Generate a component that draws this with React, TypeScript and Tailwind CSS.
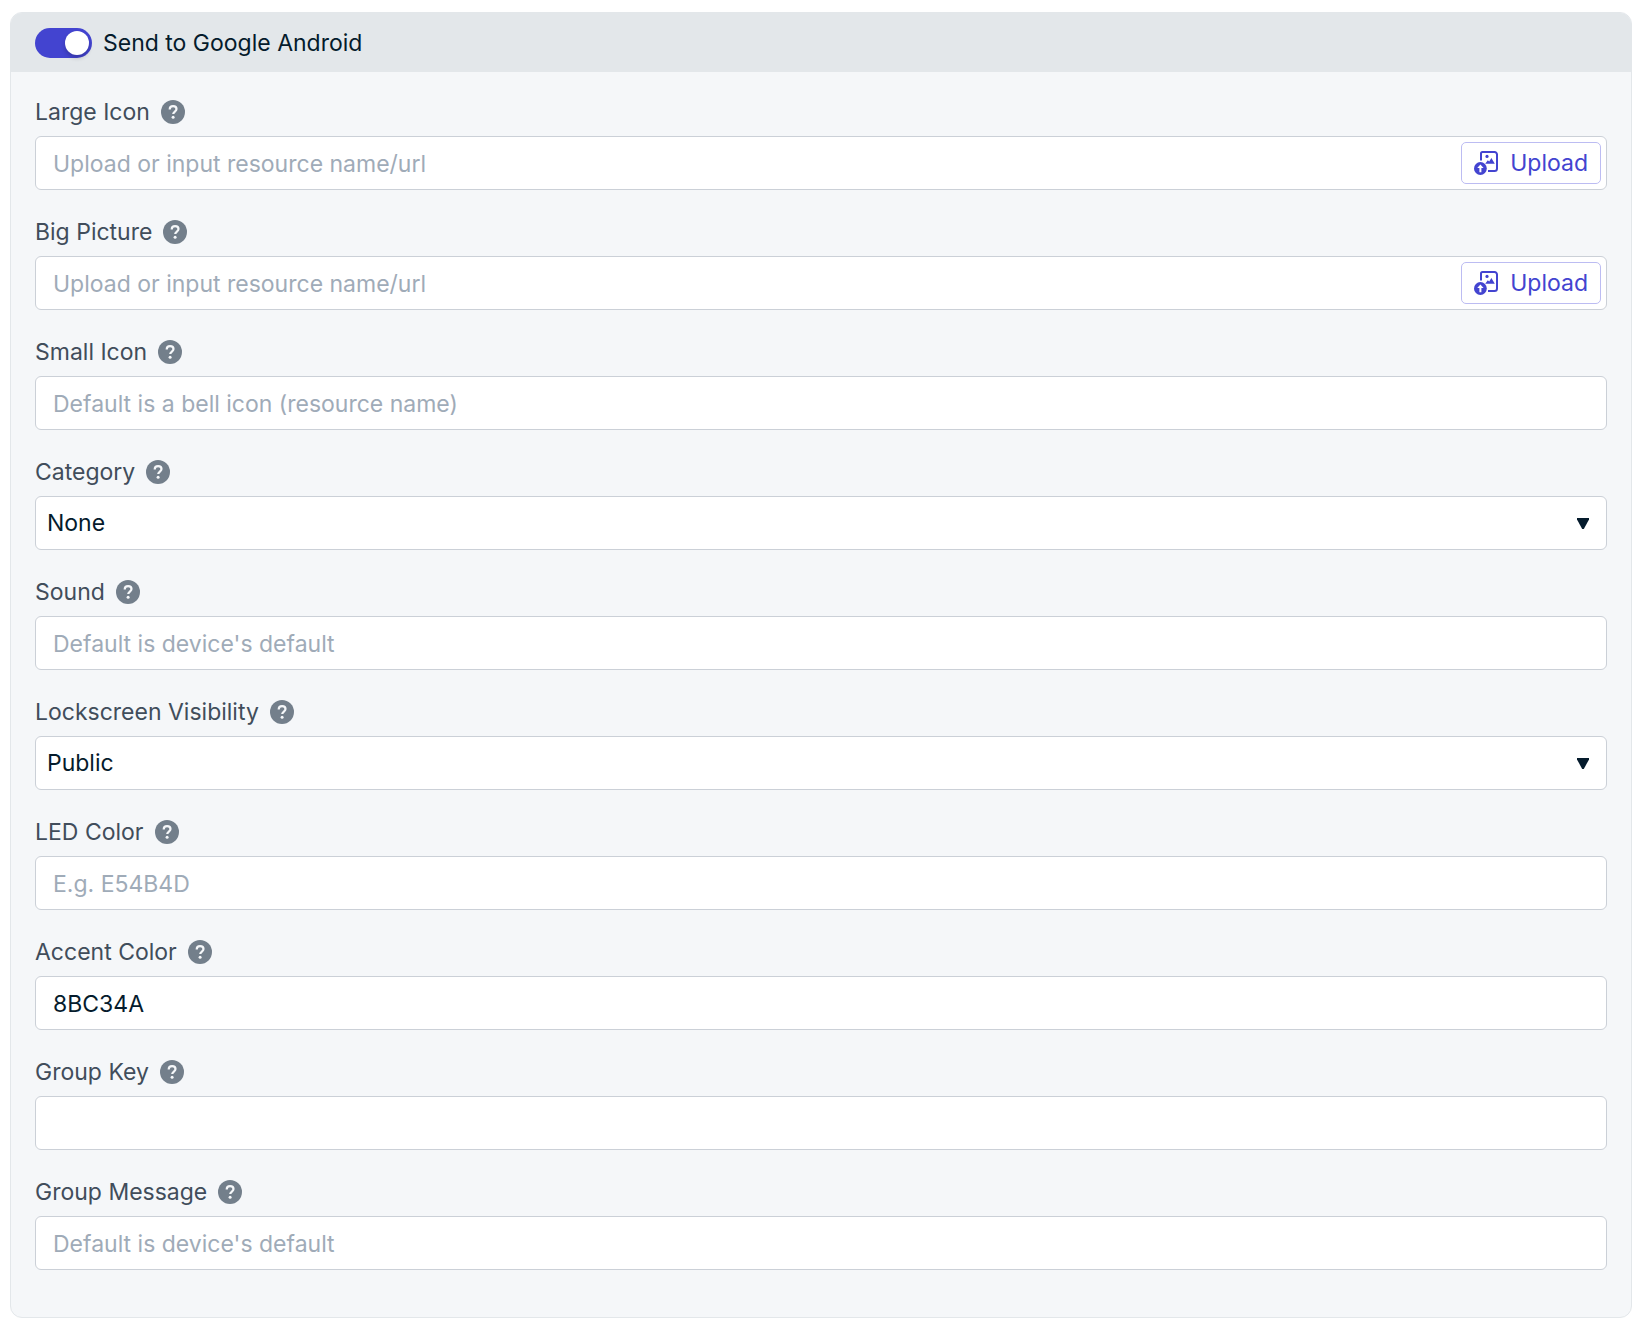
import type { ReactNode } from 'react'

function HelpIcon() {
  return (
    <svg viewBox="0 0 24 24" className="size-6" aria-hidden="true">
      <circle cx="12" cy="12" r="12" fill="#737f8b" />
      <path
        d="M8.7 9.4c0-2 1.4-3.3 3.4-3.3s3.4 1.2 3.4 3c0 2.4-3.3 2.5-3.3 5"
        fill="none"
        stroke="#f5f7f9"
        strokeWidth="2.2"
      />
      <circle cx="12.1" cy="17.2" r="1.5" fill="#f5f7f9" />
    </svg>
  )
}

function UploadIcon() {
  return (
    <svg viewBox="0 0 24 24" className="size-6" fill="#4344d0" aria-hidden="true">
      <path
        d="M7 9.6V2.5A1.5 1.5 0 0 1 8.5 1H20.5A2.5 2.5 0 0 1 23 3.5V17.5A2.5 2.5 0 0 1 20.5 20H14"
        fill="none"
        stroke="#4344d0"
        strokeWidth="2"
      />
      <circle cx="13" cy="5.4" r="1.6" />
      <path d="M11.2 12.8L13.8 9.2L15.2 10.6L17.4 7L20.8 12.8Z" />
      <circle cx="6.4" cy="17.5" r="6.4" />
      <path d="M6.4 13.4L9.6 17H7.4V21.2H5.4V17H3.2Z" fill="#fff" />
    </svg>
  )
}

interface FieldProps {
  id: string
  label: string
  children: ReactNode
}

function Field({ id, label, children }: FieldProps) {
  return (
    <div className="flex flex-col gap-[10px]">
      <div className="flex items-center gap-[11px]">
        <label htmlFor={id} className="text-[23px] leading-7 text-[#414d5b]">
          {label}
        </label>
        <button type="button" aria-label={`${label} help`}>
          <HelpIcon />
        </button>
      </div>
      {children}
    </div>
  )
}

interface TextFieldProps {
  id: string
  label: string
  placeholder?: string
  defaultValue?: string
  upload?: boolean
}

function TextField({ id, label, placeholder, defaultValue, upload }: TextFieldProps) {
  return (
    <Field id={id} label={label}>
      <div className="flex h-[54px] items-center rounded-md border border-[#cbd0d7] bg-white pr-[5px]">
        <input
          id={id}
          type="text"
          placeholder={placeholder}
          defaultValue={defaultValue}
          className="h-full min-w-0 flex-1 bg-transparent px-[17px] pt-[2px] text-[23px] text-[#051b2c] outline-none placeholder:text-[#9fabb8]"
        />
        {upload && (
          <button
            type="button"
            className="flex h-[42px] items-center gap-3 rounded-[5px] border border-[#bcbcf2] px-3 text-[23px] text-[#4344d0]"
          >
            <UploadIcon />
            Upload
          </button>
        )}
      </div>
    </Field>
  )
}

interface SelectFieldProps {
  id: string
  label: string
  options: string[]
}

function SelectField({ id, label, options }: SelectFieldProps) {
  return (
    <Field id={id} label={label}>
      <div className="relative">
        <select
          id={id}
          className="block h-[54px] w-full appearance-none rounded-md border border-[#cbd0d7] bg-white px-[11px] text-[23px] text-[#051b2c] outline-none"
        >
          {options.map((option) => (
            <option key={option}>{option}</option>
          ))}
        </select>
        <svg
          viewBox="0 0 12 12"
          className="pointer-events-none absolute top-[21px] right-[18px] size-3"
          aria-hidden="true"
        >
          <path d="M0 1H12V2.4L6.8 12H5.2L0 2.4Z" fill="#051b2c" />
        </svg>
      </div>
    </Field>
  )
}

export default function App() {
  return (
    <main className="min-h-screen bg-white pt-3 pr-3 pb-2 pl-[10px] font-['Inter',sans-serif]">
      <section className="overflow-hidden rounded-xl border border-[#e3e7ea] bg-[#f5f7f9]">
        <header className="bg-[#e3e7ea] px-6 pt-[15px] pb-[14px]">
          <label className="flex items-center gap-[11px] text-[23px] leading-[30px] text-[#051b2c]">
            <input type="checkbox" role="switch" defaultChecked className="peer sr-only" />
            <span className="flex h-[30px] w-[57px] items-center rounded-full bg-[#9fabb8] p-[3px] peer-checked:justify-end peer-checked:bg-[#4344d0]">
              <span className="size-6 rounded-full bg-white shadow-[0_3px_4px_rgba(0,0,0,0.2)]" />
            </span>
            Send to Google Android
          </label>
        </header>

        <form className="flex flex-col gap-7 px-6 pt-[26px] pb-[47px]">
          <TextField id="large-icon" label="Large Icon" placeholder="Upload or input resource name/url" upload />
          <TextField id="big-picture" label="Big Picture" placeholder="Upload or input resource name/url" upload />
          <TextField id="small-icon" label="Small Icon" placeholder="Default is a bell icon (resource name)" />
          <SelectField id="category" label="Category" options={['None']} />
          <TextField id="sound" label="Sound" placeholder="Default is device's default" />
          <SelectField id="lockscreen-visibility" label="Lockscreen Visibility" options={['Public']} />
          <TextField id="led-color" label="LED Color" placeholder="E.g. E54B4D" />
          <TextField id="accent-color" label="Accent Color" defaultValue="8BC34A" />
          <TextField id="group-key" label="Group Key" />
          <TextField id="group-message" label="Group Message" placeholder="Default is device's default" />
        </form>
      </section>
    </main>
  )
}
